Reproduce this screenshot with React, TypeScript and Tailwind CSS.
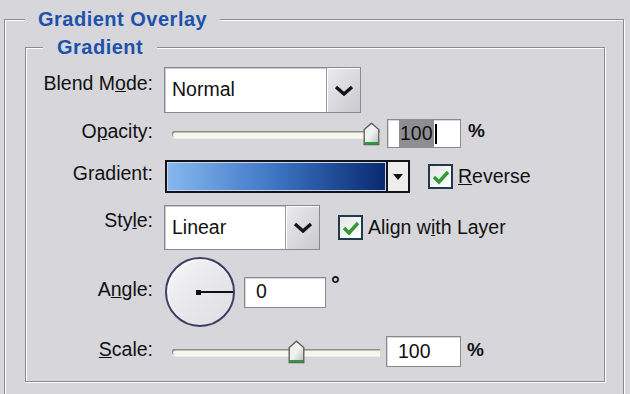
import { ReactNode } from "react";

function Thumb() {
  return (
    <svg width="17" height="24" viewBox="0 0 17 24">
      <defs>
        <linearGradient id="thumbFill" x1="0" y1="0" x2="1" y2="1">
          <stop offset="0" stopColor="#dff0dc" />
          <stop offset="0.5" stopColor="#f2f2f2" />
          <stop offset="1" stopColor="#b9b9bd" />
        </linearGradient>
      </defs>
      <path d="M8.5 1.2 L15.8 7.6 V22.5 H1.2 V7.6 Z" fill="url(#thumbFill)" stroke="#5b5b5b" strokeWidth="1.3" />
      <path d="M2 21.3 H15" stroke="#2d9a40" strokeWidth="2.6" />
    </svg>
  );
}

function Slider({ pos }: { pos: number }) {
  return (
    <div className="relative ml-[8px] h-full w-[208px]">
      <div className="absolute left-0 right-0 top-1/2 h-[7px] -translate-y-1/2 rounded-l-full border-t-2 border-l border-[#8c8c82] bg-[#f6f6ea] shadow-[0_1px_0_#ffffff]" />
      <div className="absolute top-1/2 -translate-y-1/2" style={{ left: pos }}>
        <Thumb />
      </div>
    </div>
  );
}

function Chevron() {
  return (
    <svg width="20" height="11" viewBox="0 0 20 11">
      <path d="M2 2 L10 9 L18 2" fill="none" stroke="#151515" strokeWidth="3.4" strokeLinejoin="miter" />
    </svg>
  );
}

function Select({ value, width }: { value: string; width: number }) {
  return (
    <div
      className="flex h-full border border-[#8a8a8e] bg-white shadow-[inset_1px_1px_0_#c9c9cc]"
      style={{ width }}
    >
      <div className="flex flex-1 items-center pl-[7px] text-[19.5px] text-[#111]">{value}</div>
      <div className="flex w-[34px] items-center justify-center border-l border-[#9a9aa0] bg-gradient-to-br from-[#ececef] to-[#c9c9cf] shadow-[inset_1px_1px_0_#ffffff]">
        <Chevron />
      </div>
    </div>
  );
}

function Check() {
  return (
    <div className="flex h-[25px] w-[25px] items-center justify-center border-2 border-[#1f3a48] bg-gradient-to-br from-[#e6e6e6] to-white">
      <svg width="18" height="16" viewBox="0 0 18 16">
        <path d="M2 8 L7 13 L16 3" fill="none" stroke="#2c9c33" strokeWidth="3.4" />
      </svg>
    </div>
  );
}

function Field({ children, width }: { children: ReactNode; width: number }) {
  return (
    <div
      className="flex h-full items-center border border-[#8a8a8a] bg-white pl-[11px] text-[19.5px] text-[#111] shadow-[inset_1px_1px_0_#d8d8d8]"
      style={{ width }}
    >
      {children}
    </div>
  );
}

function Row({
  label,
  h,
  mt,
  lift,
  children,
}: {
  label: ReactNode;
  h: string;
  mt: string;
  lift: string;
  children: ReactNode;
}) {
  return (
    <div className={`flex items-center ${h} ${mt}`}>
      <div className={`w-[127px] shrink-0 text-right text-[19.5px] leading-none text-[#111] ${lift}`}>{label}</div>
      <div className="ml-[11px] flex h-full items-center">{children}</div>
    </div>
  );
}

export default function App() {
  return (
    <div className="h-[394px] w-[630px] overflow-hidden bg-[#d7d6db] font-['Liberation_Sans',Arial,sans-serif]">
      <fieldset className="ml-[4px] h-[420px] w-[620px] border border-[#8b8b8e] shadow-[inset_1px_1px_0_#ffffff,1px_1px_0_#ffffff]">
        <legend className="ml-[20px] bg-[#d7d6db] px-[13px] text-[20px] font-bold leading-[38px] tracking-[0.5px] text-[#1d52aa]">
          Gradient Overlay
        </legend>
        <fieldset className="ml-[20px] h-[344px] w-[580px] border border-[#8b8b8e] shadow-[inset_1px_1px_0_#ffffff,1px_1px_0_#ffffff]">
          <legend className="ml-[17px] bg-[#d7d6db] px-[14px] text-[20px] font-bold leading-[18px] tracking-[0.5px] text-[#1d52aa]">
            Gradient
          </legend>
          <div className="flex flex-col">
            <Row label={<>Blend M<u>o</u>de:</>} h="h-[46px]" mt="mt-[11px]" lift="mb-[12px]">
              <Select value="Normal" width={197} />
            </Row>
            <Row label={<>O<u>p</u>acity:</>} h="h-[29px]" mt="mt-[6px]" lift="mb-[4px]">
              <Slider pos={191} />
              <div className="ml-[7px] h-full">
                <Field width={74}>
                  <span className="bg-[#8e8e92] px-[1px]">100</span>
                  <span className="ml-[1px] h-[20px] w-[2px] bg-black" />
                </Field>
              </div>
              <span className="mb-[5px] ml-[7px] text-[19px] font-bold text-[#111]">%</span>
            </Row>
            <Row label="Gradient:" h="h-[33px]" mt="mt-[12px]" lift="mb-[5px]">
              <div className="ml-[1px] flex h-full w-[245px] border-2 border-[#141414]">
                <div className="flex-1 border border-[#c4d6f0] bg-gradient-to-r from-[#86b8ee] via-[#3d74c4] to-[#0a2a70]" />
                <div className="flex w-[22px] items-center justify-center border-l-2 border-[#141414] bg-[#ededed]">
                  <svg width="10" height="6" viewBox="0 0 10 6">
                    <path d="M0 0 H10 L5 6 Z" fill="#111" />
                  </svg>
                </div>
              </div>
              <div className="ml-[18px]">
                <Check />
              </div>
              <span className="ml-[5px] text-[19.5px] text-[#111]">
                <u>R</u>everse
              </span>
            </Row>
            <Row label={<>Sty<u>l</u>e:</>} h="h-[45px]" mt="mt-[12px]" lift="mb-[13px]">
              <Select value="Linear" width={156} />
              <div className="ml-[18px]">
                <Check />
              </div>
              <span className="ml-[5px] text-[19.5px] text-[#111]">
                Align w<u>i</u>th Layer
              </span>
            </Row>
            <Row label={<>A<u>n</u>gle:</>} h="h-[70px]" mt="mt-[7px]" lift="mb-[5px]">
              <div className="ml-[1px] flex h-[70px] w-[70px] items-center justify-end rounded-full border-2 border-[#3a4164] bg-gradient-to-br from-[#f6f6f8] to-[#dcdce2] shadow-[inset_1px_1px_2px_#ffffff]">
                <div className="h-[5px] w-[5px] bg-[#111]" />
                <div className="h-[2px] w-[32px] bg-[#111]" />
              </div>
              <div className="ml-[9px] h-[31px]">
                <Field width={82}>0</Field>
              </div>
              <span className="mb-[14px] ml-[5px] text-[22px] font-bold leading-none text-[#111]">°</span>
            </Row>
            <Row label={<><u>S</u>cale:</>} h="h-[31px]" mt="mt-[9px]" lift="mb-[3px]">
              <Slider pos={116} />
              <div className="ml-[6px] h-full">
                <Field width={75}>100</Field>
              </div>
              <span className="mb-[2px] ml-[6px] text-[19px] font-bold text-[#111]">%</span>
            </Row>
          </div>
        </fieldset>
      </fieldset>
    </div>
  );
}
